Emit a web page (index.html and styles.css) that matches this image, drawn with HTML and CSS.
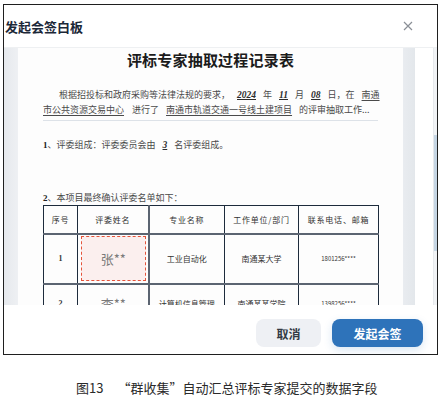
FILE: index.html
```html
<!DOCTYPE html>
<html lang="zh-CN">
<head>
    <meta charset="UTF-8">
    <title>发起会签白板</title>
    <link rel="stylesheet" href="styles.css">
</head>
<body>

    <!-- Dialog -->
    <div class="frame">
        <div class="head">
            <h1>发起会签白板</h1>
            <svg class="close" viewBox="0 0 10 10"><path d="M1 1L9 9M9 1L1 9" stroke="#8a8f96" stroke-width="1.2" fill="none"/></svg>
        </div>

        <div class="viewer">
            <div class="shade-left"></div>
            <div class="page">
                <h2>评标专家抽取过程记录表</h2>
                <div class="intro">
                    <div class="line indent">根据招投标和政府采购等法律法规的要求，<span class="num">2024</span>年<span class="num">11</span>月<span class="num">08</span>日，在<span class="fill">南通</span></div>
                    <div class="line"><span class="fill first">市公共资源交易中心</span>进行了<span class="fill">南通市轨道交通一号线土建项目</span><span class="after">的评审抽取工作...</span></div>
                </div>
                <div class="line item"><b>1</b>、评委组成：评委委员会由<span class="num">3</span>名评委组成。</div>
                <div class="line item second"><b>2</b>、本项目最终确认评委名单如下：</div>

                <table class="list">
                    <tr class="thead">
                        <td class="c1">序号</td>
                        <td class="c2">评委姓名</td>
                        <td class="c3">专业名称</td>
                        <td class="c4">工作单位/部门</td>
                        <td class="c5">联系电话、邮箱</td>
                    </tr>
                    <tr class="row">
                        <td class="c1 idx">1</td>
                        <td class="c2"><div class="sign">张**</div></td>
                        <td class="c3">工业自动化</td>
                        <td class="c4">南通某大学</td>
                        <td class="c5 tel">1801256****</td>
                    </tr>
                    <tr class="row last">
                        <td class="c1 idx">2</td>
                        <td class="c2"><div class="sign plain">李**</div></td>
                        <td class="c3">计算机信息管理</td>
                        <td class="c4">南通某某学院</td>
                        <td class="c5 tel">1398256****</td>
                    </tr>
                </table>
            </div>
            <div class="shade-right"></div>
            <div class="blank"></div>
            <div class="track"><div class="thumb"></div></div>
        </div>

        <div class="foot">
            <button class="btn cancel">取消</button>
            <button class="btn primary">发起会签</button>
        </div>
    </div>

    <p class="caption"><span>图13</span>“群收集”自动汇总评标专家提交的数据字段</p>

</body>
</html>
```

FILE: styles.css
```css
* {
    margin: 0;
    padding: 0;
    box-sizing: border-box;
    font-family: "Noto Sans CJK SC", "Noto Sans", sans-serif;
}
body {
    background: #fff;
    width: 444px;
    height: 396px;
    overflow: hidden;
}
.frame {
    width: 435px;
    height: 351px;
    margin: 4px 0 0 3px;
    border: 1px solid #1f1f1f;
    display: flex;
    flex-direction: column;
}
.head {
    height: 42px;
    flex: none;
    display: flex;
    align-items: center;
    justify-content: space-between;
    padding: 0 24px 0 1px;
}
.head h1 {
    font-size: 13px;
    font-weight: bold;
    color: #1c2838;
}
.close {
    width: 10px;
    height: 10px;
}
/* document viewer */
.viewer {
    height: 258px;
    flex: none;
    display: flex;
    overflow: hidden;
    border-top: 1px solid #eef0f2;
}
.shade-left {
    width: 14px;
    background: linear-gradient(to right, #e6e9ed, #eef0f3);
}
.page {
    width: 385px;
    background: #fdfdfd;
    padding: 0 25px;
    overflow: hidden;
}
.shade-right {
    width: 12px;
    background: linear-gradient(to right, #e9ecf0, #e3e7eb);
}
.blank {
    width: 18px;
    background: #fff;
}
.track {
    width: 4px;
    background: #f1f3f5;
    border-left: 1px solid #e6e9ec;
    position: relative;
}
.thumb {
    position: absolute;
    left: 0;
    right: 0;
    top: 87px;
    height: 116px;
    background: #c6d6e4;
}
.page h2 {
    height: 24px;
    font-size: 15px;
    font-weight: bold;
    color: #1b1b1b;
    text-align: center;
    line-height: 24px;
    letter-spacing: 0.2px;
}
.line {
    height: 15px;
    display: flex;
    align-items: center;
    white-space: nowrap;
    font-size: 9px;
    color: #4a4a4a;
}
.intro {
    margin-top: 15px;
    padding-bottom: 3px;
    border-bottom: 1px solid #dde2e8;
}
.indent {
    padding-left: 16px;
}
.num {
    font-family: "Liberation Serif", serif;
    font-style: italic;
    font-weight: bold;
    font-size: 9.5px;
    color: #2c2c2c;
    text-decoration: underline;
    margin: 0 7px;
}
.fill {
    text-decoration: underline;
    text-underline-offset: 2px;
    margin-left: 7px;
}
.fill.first {
    margin: 0 8px 0 0;
}
.after {
    margin-left: 7px;
}
.item {
    margin-top: 16px;
}
.item b {
    font-family: "Liberation Serif", serif;
    color: #222;
}
.item.second {
    margin-top: 38px;
}
.list {
    margin-top: 0;
    width: 335px;
    border-collapse: collapse;
    table-layout: fixed;
    color: #333;
}
.list td {
    border: 1px solid #1d2b3c;
    text-align: center;
    vertical-align: middle;
    font-size: 8px;
    padding: 0;
}
.thead td {
    height: 28px;
    letter-spacing: 0.8px;
    border-bottom: 1px solid #5b6471;
}
.row td {
    height: 50px;
    border-top: 2px solid #5b6471;
}
.row.last td {
    height: 40px;
}
.list .c2 {
    border-right: 2px solid #5b6471;
}
.c1 { width: 34px; }
.c2 { width: 71px; }
.c3 { width: 76px; }
.c4 { width: 74px; }
.c5 { width: 80px; }
.idx {
    font-family: "Liberation Serif", serif;
    font-weight: bold;
}
.list .tel {
    font-size: 6px;
}
.sign {
    margin: 0 2px 0 3px;
    height: 45px;
    border: 1.5px dashed #e5533a;
    background: #fbefee;
    display: flex;
    align-items: center;
    justify-content: center;
    font-size: 13px;
    color: #7a7a7a;
}
.sign.plain {
    height: 30px;
    border-color: transparent;
    background: none;
}
/* footer */
.foot {
    flex: 1;
    display: flex;
    justify-content: flex-end;
    gap: 11px;
    padding: 14px 14px 0 0;
    background: #fff;
}
.btn {
    height: 28px;
    border: none;
    border-radius: 8px;
    font-size: 12px;
    font-weight: bold;
}
.cancel {
    width: 65px;
    background: #eef0f4;
    color: #333a44;
}
.primary {
    width: 91px;
    background: #2e73ba;
    color: #fff;
    box-shadow: 0 3px 8px rgba(46, 115, 186, 0.18);
}
.caption {
    margin-top: 24px;
    padding-left: 76px;
    font-size: 13px;
    color: #2a2a2a;
    line-height: 18px;
}
.caption span {
    margin-right: 14px;
}
```
